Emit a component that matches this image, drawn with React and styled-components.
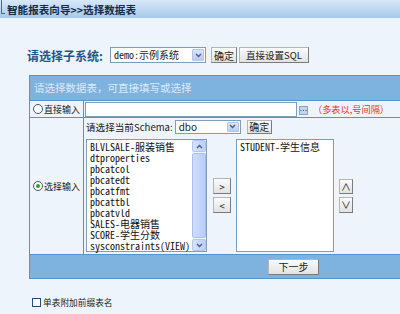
import React from "react";
import styled, { createGlobalStyle } from "styled-components";

const SANS = `"Noto Sans CJK SC", "Liberation Sans", sans-serif`;
const MONO = `"Noto Sans Mono CJK SC", "Liberation Mono", "Noto Sans CJK SC", monospace`;
const LINE = "#5a92c6";
const BAR = "#7eb3e0";

const GlobalStyle = createGlobalStyle`
  html, body {
    margin: 0;
    padding: 0;
    background: #eef4fb;
    overflow: hidden;
  }
  body {
    font-family: ${SANS};
    font-size: 10px;
    color: #1a1a1a;
  }
`;

const Page = styled.div`
  width: 400px;
  height: 314px;
  overflow: hidden;
`;

const TitleBar = styled.div`
  display: flex;
  align-items: center;
  height: 18px;
  padding-left: 1px;
  background: linear-gradient(#d8e8f8, #a6c9eb);
`;

const Bracket = styled.span`
  align-self: flex-start;
  width: 3px;
  height: 13px;
  border-left: 1px solid #55677a;
  border-bottom: 1px solid #55677a;
`;

const Title = styled.h1`
  margin: 0 0 0 2px;
  font-size: 10.6px;
  font-weight: 700;
  color: #142c46;
  white-space: nowrap;
`;

const Content = styled.div`
  padding-left: 27px;
`;

const SystemRow = styled.div`
  display: flex;
  align-items: center;
  height: 16px;
  margin-top: 29px;
`;

const SystemLabel = styled.span`
  width: 78px;
  margin-right: 5px;
  font-size: 12px;
  font-weight: 700;
  color: #21558c;
  white-space: nowrap;
`;

const Select = styled.div`
  display: flex;
  align-items: center;
  box-sizing: border-box;
  width: ${(p) => p.$width}px;
  height: ${(p) => p.$height}px;
  margin-right: ${(p) => p.$gap || 0}px;
  border: 1px solid #7f9db9;
  background: #fff;
  padding: 1px;
`;

const SelectText = styled.span`
  flex: 1;
  padding-left: 2px;
  font-family: ${(p) => (p.$mono ? MONO : SANS)};
  font-size: 10px;
  line-height: 12px;
  white-space: nowrap;
`;

const ArrowBox = styled.span`
  display: flex;
  align-items: center;
  justify-content: center;
  box-sizing: border-box;
  width: 12px;
  height: 100%;
  border: 1px solid #b4c6f0;
  border-radius: 1px;
  background: linear-gradient(#dbe5fd, #b6cafa);
`;

const Button = styled.div`
  display: flex;
  align-items: center;
  justify-content: center;
  box-sizing: border-box;
  width: ${(p) => p.$width}px;
  height: ${(p) => p.$height}px;
  margin-right: ${(p) => p.$gap || 0}px;
  border: 1px solid #7b7b7b;
  border-top-color: #b5b5b5;
  border-left-color: #b5b5b5;
  background: linear-gradient(#fbfbfb, #e2e2e2);
  font-size: ${(p) => p.$size || 10}px;
  color: #222;
  white-space: nowrap;
`;

const Panel = styled.div`
  box-sizing: border-box;
  width: 529px;
  margin: 12px 0 0 2px;
  border: 1px solid ${LINE};
`;

const PanelHeader = styled.div`
  height: 24px;
  padding-left: 4px;
  border-bottom: 1px solid ${LINE};
  background: ${BAR};
  color: #dce9f7;
  font-size: 10.5px;
  line-height: 24px;
`;

const Row = styled.div`
  display: grid;
  grid-template-columns: 54px 1fr;
  height: ${(p) => p.$height}px;
  border-bottom: 1px solid ${LINE};
`;

const LeftCell = styled.label`
  display: flex;
  align-items: center;
  gap: 1px;
  padding-left: 3px;
  border-right: 1px solid ${LINE};
  font-size: 9px;
  color: #1a1a1a;
  white-space: nowrap;
`;

const RightCell = styled.div`
  display: flex;
  flex-direction: ${(p) => (p.$column ? "column" : "row")};
  align-items: ${(p) => (p.$column ? "stretch" : "center")};
  padding: ${(p) => (p.$column ? "1px 0 0 2px" : "0 0 0 1px")};
`;

const Radio = styled.span`
  position: relative;
  box-sizing: border-box;
  width: 10px;
  height: 10px;
  border: 1px solid #44566a;
  border-radius: 50%;
  background: #fff;
  &::after {
    content: "";
    display: ${(p) => (p.$checked ? "block" : "none")};
    position: absolute;
    left: 2px;
    top: 2px;
    width: 4px;
    height: 4px;
    border-radius: 50%;
    background: #2da12d;
  }
`;

const TextInput = styled.div`
  box-sizing: border-box;
  width: 212px;
  height: 15px;
  margin-right: 2px;
  border: 1px solid #7f9db9;
  background: #fff;
`;

const DotsButton = styled.span`
  display: flex;
  align-items: center;
  justify-content: center;
  box-sizing: border-box;
  width: 9px;
  height: 9px;
  margin: 3px 5px 0 0;
  border: 1px solid #8da3c2;
  background: #c5d3e8;
`;

const Note = styled.span`
  font-size: 9.2px;
  color: #e0362e;
  white-space: nowrap;
`;

const SchemaRow = styled.div`
  display: flex;
  align-items: center;
  height: 15px;
  margin-bottom: 5px;
`;

const SchemaLabel = styled.span`
  margin-right: 2px;
  font-size: 9.6px;
  white-space: nowrap;
`;

const Transfer = styled.div`
  display: flex;
  align-items: center;
  height: 113px;
`;

const ListBox = styled.div`
  display: flex;
  box-sizing: border-box;
  width: ${(p) => p.$width}px;
  height: 100%;
  border: 1px solid #7f9db9;
  background: #fff;
`;

const Items = styled.div`
  flex: 1;
  padding: 1px 0 0 3px;
`;

const Item = styled.div`
  font-family: ${MONO};
  font-size: 10px;
  line-height: 11px;
  white-space: nowrap;
  color: #111;
`;

const Scrollbar = styled.div`
  display: flex;
  flex-direction: column;
  width: 14px;
  background: #f1f4fc;
`;

const ScrollArrow = styled.span`
  display: flex;
  align-items: center;
  justify-content: center;
  box-sizing: border-box;
  height: 12px;
  border: 1px solid #b4c6f0;
  border-radius: 2px;
  background: linear-gradient(90deg, #d7e2fd, #bccffb);
`;

const ScrollThumb = styled.span`
  flex: 1;
  margin: 1px 0;
  box-sizing: border-box;
  border: 1px solid #a9bff0;
  border-radius: 2px;
  background: linear-gradient(90deg, #cfdcfc, #b9cdf9);
`;

const ButtonStack = styled.div`
  display: flex;
  flex-direction: column;
  gap: 3px;
  margin: 0 ${(p) => p.$right}px 0 ${(p) => p.$left}px;
`;

const Footer = styled.div`
  display: flex;
  align-items: center;
  justify-content: center;
  height: 23px;
  background: ${BAR};
`;

const CheckRow = styled.label`
  display: flex;
  align-items: center;
  gap: 2px;
  margin: 17px 0 0 5px;
  font-size: 8.7px;
  color: #222;
`;

const CheckBox = styled.span`
  box-sizing: border-box;
  width: 9px;
  height: 9px;
  border: 1px solid #1e4f80;
  background: #fff;
`;

const Chevron = ({ up }) => (
  <svg width="7" height="5" viewBox="0 0 7 5">
    <path
      d={up ? "M1 4 L3.5 1.5 L6 4" : "M1 1 L3.5 3.5 L6 1"}
      fill="none"
      stroke="#4d6185"
      strokeWidth="1.5"
    />
  </svg>
);

const Dots = () => (
  <svg width="7" height="3" viewBox="0 0 7 3">
    <rect x="0.5" y="1" width="1" height="1" fill="#44546c" />
    <rect x="3" y="1" width="1" height="1" fill="#44546c" />
    <rect x="5.5" y="1" width="1" height="1" fill="#44546c" />
  </svg>
);

const TABLES = [
  "BLVLSALE-服装销售",
  "dtproperties",
  "pbcatcol",
  "pbcatedt",
  "pbcatfmt",
  "pbcattbl",
  "pbcatvld",
  "SALES-电器销售",
  "SCORE-学生分数",
  "sysconstraints(VIEW)",
];

const SELECTED = ["STUDENT-学生信息"];

export default function App() {
  return (
    <Page>
      <GlobalStyle />
      <TitleBar>
        <Bracket />
        <Title>智能报表向导&gt;&gt;选择数据表</Title>
      </TitleBar>
      <Content>
        <SystemRow>
          <SystemLabel>请选择子系统:</SystemLabel>
          <Select $width={96} $height={16} $gap={5}>
            <SelectText $mono>demo:示例系统</SelectText>
            <ArrowBox>
              <Chevron />
            </ArrowBox>
          </Select>
          <Button $width={26} $height={16} $gap={2}>
            确定
          </Button>
          <Button $width={70} $height={16} $size={9.5}>
            直接设置SQL
          </Button>
        </SystemRow>

        <Panel>
          <PanelHeader>请选择数据表，可直接填写或选择</PanelHeader>
          <Row $height={16}>
            <LeftCell>
              <Radio />
              直接输入
            </LeftCell>
            <RightCell>
              <TextInput />
              <DotsButton>
                <Dots />
              </DotsButton>
              <Note>（多表以,号间隔）</Note>
            </RightCell>
          </Row>
          <Row $height={136}>
            <LeftCell>
              <Radio $checked />
              选择输入
            </LeftCell>
            <RightCell $column>
              <SchemaRow>
                <SchemaLabel>请选择当前Schema:</SchemaLabel>
                <Select $width={66} $height={14} $gap={6}>
                  <SelectText>dbo</SelectText>
                  <ArrowBox>
                    <Chevron />
                  </ArrowBox>
                </Select>
                <Button $width={25} $height={14}>
                  确定
                </Button>
              </SchemaRow>
              <Transfer>
                <ListBox $width={121}>
                  <Items>
                    {TABLES.map((name) => (
                      <Item key={name}>{name}</Item>
                    ))}
                  </Items>
                  <Scrollbar>
                    <ScrollArrow>
                      <Chevron up />
                    </ScrollArrow>
                    <ScrollThumb />
                    <ScrollArrow>
                      <Chevron />
                    </ScrollArrow>
                  </Scrollbar>
                </ListBox>
                <ButtonStack $left={6} $right={5}>
                  <Button $width={18} $height={16}>&gt;</Button>
                  <Button $width={18} $height={16}>&lt;</Button>
                </ButtonStack>
                <ListBox $width={98}>
                  <Items>
                    {SELECTED.map((name) => (
                      <Item key={name}>{name}</Item>
                    ))}
                  </Items>
                </ListBox>
                <ButtonStack $left={5} $right={0}>
                  <Button $width={14} $height={15}>∧</Button>
                  <Button $width={14} $height={16}>∨</Button>
                </ButtonStack>
              </Transfer>
            </RightCell>
          </Row>
          <Footer>
            <Button $width={51} $height={16}>
              下一步
            </Button>
          </Footer>
        </Panel>

        <CheckRow>
          <CheckBox />
          单表附加前缀表名
        </CheckRow>
      </Content>
    </Page>
  );
}
